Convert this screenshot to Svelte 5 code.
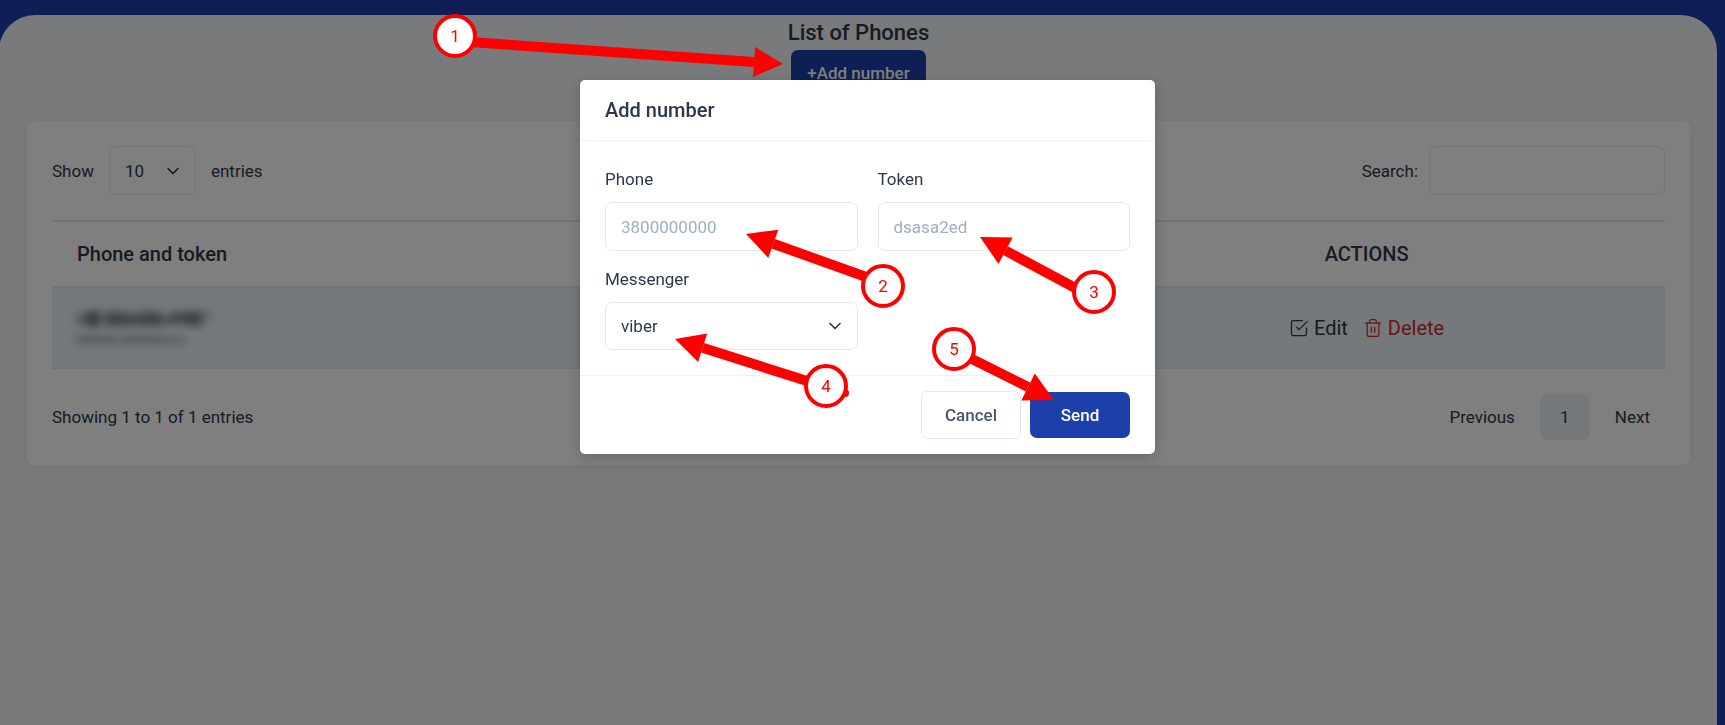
<script>
  let entries = "10";
  let search = "";
  let phone = "";
  let token = "";
  let messenger = "viber";

  // step markers drawn over the page: badge centre, line start height and arrow tip
  const steps = [
    { x: 455, y: 36, sy: 41, tx: 783, ty: 64 },
    { x: 883, y: 286, sy: 283, tx: 746, ty: 234 },
    { x: 1094, y: 292, sy: 298, tx: 980, ty: 237 },
    { x: 826, y: 386, sy: 387, tx: 675, ty: 339 },
    { x: 954, y: 349, sy: 350, tx: 1054, ty: 400 },
  ];

  function arrow({ x, sy, tx, ty }) {
    const len = Math.hypot(tx - x, ty - sy);
    const ux = (tx - x) / len;
    const uy = (ty - sy) / len;
    const bx = tx - ux * 29;
    const by = ty - uy * 29;
    return {
      bx,
      by,
      head: `${tx},${ty} ${bx - uy * 15},${by + ux * 15} ${bx + uy * 15},${by - ux * 15}`,
    };
  }
</script>

<div class="app">
  <main class="content">
    <h2>List of Phones</h2>
    <button class="btn primary add" type="button">+Add number</button>

    <section class="card">
      <div class="toolbar">
        <label>
          Show
          <select class="entries" bind:value={entries}>
            <option>10</option>
            <option>25</option>
            <option>50</option>
          </select>
          entries
        </label>
        <label class="search">
          Search:
          <input type="search" bind:value={search} />
        </label>
      </div>

      <table>
        <thead>
          <tr>
            <th class="phone">Phone and token</th>
            <th class="actions">ACTIONS</th>
          </tr>
        </thead>
        <tbody>
          <tr>
            <td>
              <svg class="masked" width="160" height="54" viewBox="0 0 160 54" aria-hidden="true">
                <g class="line">
                  <rect x="10" y="12" width="14" height="12" opacity="0.6" />
                  <rect x="21" y="10" width="12" height="16" />
                  <rect x="37" y="11" width="22" height="14" opacity="0.85" />
                  <rect x="58" y="12" width="20" height="13" opacity="0.75" />
                  <rect x="76" y="11" width="18" height="14" opacity="0.85" />
                  <rect x="92" y="14" width="14" height="10" opacity="0.6" />
                  <rect x="104" y="11" width="24" height="12" opacity="0.8" />
                  <rect x="120" y="11" width="16" height="14" opacity="0.8" />
                  <rect x="136" y="11" width="9" height="5" opacity="0.5" />
                </g>
                <g class="line soft">
                  <rect x="9" y="35" width="42" height="7" />
                  <rect x="54" y="35" width="42" height="7" />
                  <rect x="96" y="35" width="22" height="8" opacity="0.7" />
                </g>
              </svg>
            </td>
            <td>
              <div class="links">
                <a href="#edit">
                  <svg width="20" height="20" viewBox="0 0 24 24">
                    <polyline points="9 11 12 14 22 4" />
                    <path d="M21 12v7a2 2 0 0 1-2 2H5a2 2 0 0 1-2-2V5a2 2 0 0 1 2-2h11" />
                  </svg>
                  Edit
                </a>
                <a href="#delete" class="danger">
                  <svg width="20" height="20" viewBox="0 0 24 24">
                    <polyline points="3 6 5 6 21 6" />
                    <path d="M19 6v14a2 2 0 0 1-2 2H7a2 2 0 0 1-2-2V6m3 0V4a2 2 0 0 1 2-2h4a2 2 0 0 1 2 2v2" />
                    <line x1="10" y1="11" x2="10" y2="17" />
                    <line x1="14" y1="11" x2="14" y2="17" />
                  </svg>
                  Delete
                </a>
              </div>
            </td>
          </tr>
        </tbody>
      </table>

      <div class="footer">
        <span>Showing 1 to 1 of 1 entries</span>
        <nav>
          <button type="button">Previous</button>
          <button type="button" class="current">1</button>
          <button type="button">Next</button>
        </nav>
      </div>
    </section>
  </main>
</div>

<div class="overlay">
  <form class="modal" on:submit|preventDefault>
    <header><h3>Add number</h3></header>
    <div class="fields">
      <div class="field">
        <label for="phone">Phone</label>
        <input id="phone" type="text" placeholder="3800000000" bind:value={phone} />
      </div>
      <div class="field">
        <label for="token">Token</label>
        <input id="token" type="text" placeholder="dsasa2ed" bind:value={token} />
      </div>
      <div class="field">
        <label for="messenger">Messenger</label>
        <select id="messenger" bind:value={messenger}>
          <option>viber</option>
          <option>telegram</option>
        </select>
      </div>
    </div>
    <footer>
      <button class="btn outline" type="button">Cancel</button>
      <button class="btn primary" type="submit">Send</button>
    </footer>
  </form>
</div>

<svg class="steps">
  <circle cx="845" cy="393" r="4" fill="#f00" />
  {#each steps as step, i}
    {@const a = arrow(step)}
    <line x1={step.x} y1={step.sy} x2={a.bx} y2={a.by} />
    <polygon points={a.head} />
    <circle class="badge" cx={step.x} cy={step.y} r="20" />
    <text x={step.x} y={step.y + 6}>{i + 1}</text>
  {/each}
</svg>

<style>
  :global(body) {
    margin: 0;
    background: #1c3faa;
    color: #2d3748;
    font-family: Roboto, sans-serif;
    font-size: 17px;
    line-height: 26px;
  }

  .app,
  .app *,
  .overlay,
  .overlay * {
    box-sizing: border-box;
  }

  .app {
    display: flex;
    min-height: 100vh;
    padding: 15px 8px 0 0;
    overflow: hidden;
  }

  .content {
    flex: 1;
    margin-left: -1px;
    padding: 0 27px 30px 28px;
    border-radius: 36px 36px 0 0;
    background: #f1f5f8;
    text-align: center;
  }

  h2,
  h3 {
    margin: 0;
    font-weight: 500;
  }

  h2 {
    font-size: 22px;
    line-height: 35px;
  }

  h3 {
    font-size: 20px;
    line-height: 30px;
  }

  button,
  input,
  select {
    font: inherit;
    color: inherit;
  }

  input,
  select {
    height: 49px;
    padding: 0 15px;
    border: 1px solid #e2e8f0;
    border-radius: 7px;
    background-color: #fff;
    outline: none;
  }

  input::placeholder {
    color: #a0aec0;
    opacity: 1;
  }

  select {
    appearance: none;
    background-image: url("data:image/svg+xml,%3Csvg xmlns='http://www.w3.org/2000/svg' width='20' height='20' viewBox='0 0 24 24' fill='none' stroke='%232d3748' stroke-width='2' stroke-linecap='round' stroke-linejoin='round'%3E%3Cpath d='M6 9l6 6 6-6'/%3E%3C/svg%3E");
    background-repeat: no-repeat;
    background-position: right 12px center;
  }

  .btn {
    height: 46px;
    padding: 0 16px;
    border: 0;
    border-radius: 7px;
    font-weight: 500;
  }

  .primary {
    background: #1c3faa;
    color: #fff;
  }

  .outline {
    height: 48px;
    border: 1px solid #e2e8f0;
    background: #fff;
    color: #4a5568;
  }

  .card {
    margin-top: 25px;
    padding: 25px;
    border-radius: 7px;
    background: #fff;
    box-shadow: 0 3px 20px rgba(0, 0, 0, 0.05);
    text-align: left;
  }

  .toolbar,
  .toolbar label,
  .footer,
  nav {
    display: flex;
    align-items: center;
  }

  .toolbar,
  .footer {
    justify-content: space-between;
  }

  .toolbar label {
    gap: 15px;
  }

  .toolbar .search {
    gap: 11px;
  }

  .entries {
    width: 87px;
  }

  .search input {
    width: 236px;
  }

  table {
    width: 100%;
    margin: 25px 0;
    border-collapse: separate;
    border-spacing: 0;
    border-top: 2px solid #e2e8f0;
    font-size: 20px;
    table-layout: fixed;
  }

  th {
    height: 66px;
    padding: 0 25px;
    border-bottom: 2px solid #e2e8f0;
    font-weight: 500;
  }

  .phone {
    width: 63%;
    text-align: left;
  }

  .actions {
    width: 37%;
    text-align: center;
  }

  td {
    height: 81px;
    padding: 0 15px;
    border-bottom: 1px solid #dde5ec;
    background: #eaf2f7;
  }

  .masked {
    display: block;
  }

  .line {
    fill: #6b7280;
    filter: blur(4px);
  }

  .soft {
    fill: #a3abb5;
  }

  .links {
    display: flex;
    justify-content: center;
    gap: 15px;
  }

  .links a {
    display: flex;
    align-items: center;
    gap: 5px;
    color: inherit;
    text-decoration: none;
  }

  .links svg {
    fill: none;
    stroke: currentColor;
    stroke-width: 1.5;
    stroke-linecap: round;
    stroke-linejoin: round;
  }

  .links .danger {
    color: #d32929;
  }

  nav {
    gap: 10px;
  }

  nav button {
    min-width: 50px;
    height: 46px;
    padding: 0 15px;
    border: 0;
    border-radius: 7px;
    background: none;
  }

  nav .current {
    background: #eaf2f7;
  }

  .overlay {
    position: fixed;
    inset: 0;
    padding: 80px 20px 20px 30px;
    background: rgba(0, 0, 0, 0.5);
  }

  .modal {
    max-width: 575px;
    margin: 0 auto;
    border-radius: 5px;
    background: #fff;
    box-shadow: 0 3px 15px rgba(0, 0, 0, 0.2);
  }

  header {
    padding: 15px 25px;
    border-bottom: 1px solid #edf2f7;
  }

  .fields {
    display: grid;
    grid-template-columns: repeat(2, minmax(0, 1fr));
    gap: 15px 20px;
    padding: 25px;
  }

  .field {
    display: flex;
    flex-direction: column;
    gap: 10px;
  }

  .field select {
    height: 48px;
  }

  footer {
    display: flex;
    align-items: center;
    justify-content: flex-end;
    gap: 9px;
    padding: 15px 25px;
    border-top: 1px solid #edf2f7;
  }

  footer .btn {
    width: 100px;
  }

  .steps {
    position: absolute;
    top: 0;
    left: 0;
    width: 100%;
    height: 100%;
    pointer-events: none;
  }

  .steps line {
    stroke: #f00;
    stroke-width: 10;
  }

  .steps polygon {
    fill: #f00;
  }

  .badge {
    fill: #fff;
    stroke: #f00;
    stroke-width: 4;
  }

  .steps text {
    fill: #f00;
    font-size: 17px;
    text-anchor: middle;
  }
</style>
